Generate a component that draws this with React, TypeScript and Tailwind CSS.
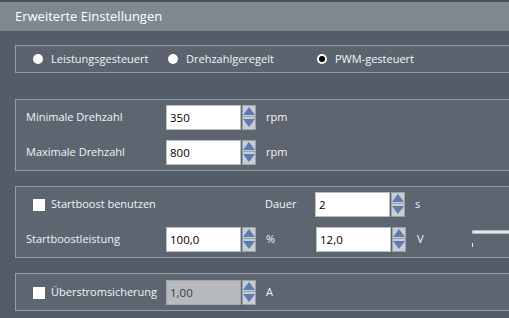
import React from "react";

const font = { fontFamily: '"Open Sans", "Noto Sans", sans-serif' };

const Spinner: React.FC = () => (
    <div className="flex flex-col w-[14px] h-[25px] ml-[1px]">
        <div className="h-[12px] bg-[#c9cdd1] border border-[#9ba1a7] flex items-center justify-center">
            <svg width="12" height="8" viewBox="0 0 12 8">
                <polygon points="6,0 12,8 0,8" fill="#5b7db4" />
            </svg>
        </div>
        <div className="h-[13px] bg-[#c9cdd1] border border-t-0 border-[#9ba1a7] flex items-center justify-center">
            <svg width="12" height="8" viewBox="0 0 12 8">
                <polygon points="0,0 12,0 6,8" fill="#5b7db4" />
            </svg>
        </div>
    </div>
);

interface fieldProps {
    value: string;
    disabled?: boolean;
}
const NumberField: React.FC<fieldProps> = ({ value, disabled }) => (
    <div className="flex items-center">
        <div
            className={
                disabled
                    ? "w-[75px] h-[25px] bg-[#b7bbbf] border border-[#a3a8ad] pl-[3px] flex items-center text-[11.5px] text-[#3a3a3a]"
                    : "w-[75px] h-[25px] bg-white border border-[#b9bdc1] pl-[3px] flex items-center text-[11.5px] text-black"
            }
        >
            {value}
        </div>
        <Spinner />
    </div>
);

const Radio: React.FC<{ checked?: boolean; label: string; width: string }> = ({ checked, label, width }) => (
    <div className={`flex items-center ${width}`}>
        <div className="w-[10px] h-[10px] rounded-full bg-white flex items-center justify-center ml-[2px]">
            {checked && <div className="w-[6px] h-[6px] rounded-full bg-black" />}
        </div>
        <span className="ml-[8px]">{label}</span>
    </div>
);

const Checkbox: React.FC = () => <div className="w-[12px] h-[12px] bg-white" />;

export default function App() {
    return (
        <div className="w-[509px] h-[318px] overflow-hidden bg-[#535d68] text-[11px] text-[#f2f4f6]" style={font}>
            <div className="h-[31px] bg-[#7f878f] border-t-2 border-[#484e55] flex items-center pl-[15px] text-[13px] text-white">
                Erweiterte Einstellungen
            </div>

            <div className="flex flex-col pl-[15px] pt-[14px] -mr-[10px]">
                <div className="h-[28px] border border-[#979da4] bg-[#5b646e] flex items-center pl-[15px]">
                    <Radio label="Leistungsgesteuert" width="w-[135px]" />
                    <Radio label="Drehzahlgeregelt" width="w-[149px]" />
                    <Radio checked label="PWM-gesteuert" width="w-[120px]" />
                </div>

                <div className="mt-[26px] border border-[#979da4] bg-[#5d6670] pl-[10px] pt-[5px] pb-[5px] flex flex-col gap-[10px]">
                    <div className="flex items-center">
                        <span className="w-[140px]">Minimale Drehzahl</span>
                        <NumberField value="350" />
                        <span className="ml-[10px]">rpm</span>
                    </div>
                    <div className="flex items-center">
                        <span className="w-[140px]">Maximale Drehzahl</span>
                        <NumberField value="800" />
                        <span className="ml-[10px]">rpm</span>
                    </div>
                </div>

                <div className="mt-[15px] border border-[#979da4] bg-[#5d6670] pl-[10px] pt-[5px] pb-[5px] flex flex-col gap-[10px]">
                    <div className="flex items-center">
                        <div className="w-[140px] flex items-center pl-[7px]">
                            <Checkbox />
                            <span className="ml-[6px] whitespace-nowrap">Startboost benutzen</span>
                        </div>
                        <div className="w-[90px]" />
                        <span className="w-[50px] ml-[9px]">Dauer</span>
                        <NumberField value="2" />
                        <span className="ml-[10px]">s</span>
                    </div>
                    <div className="flex items-center">
                        <span className="w-[140px]">Startboostleistung</span>
                        <NumberField value="100,0" />
                        <span className="w-[50px] ml-[10px]">%</span>
                        <NumberField value="12,0" />
                        <span className="ml-[11px]">V</span>
                        <div className="ml-[48px] flex flex-col flex-1">
                            <div className="h-[4px] bg-[#e6e8ea] border border-[#b0b5ba] mt-[-3px]" />
                            <div className="w-[1px] h-[4px] bg-[#e6e8ea] mt-[9px]" />
                        </div>
                    </div>
                </div>

                <div className="mt-[15px] border border-[#979da4] bg-[#5d6670] pl-[17px] pt-[6px] pb-[5px] flex items-center">
                    <Checkbox />
                    <span className="ml-[6px] w-[115px]">Überstromsicherung</span>
                    <NumberField value="1,00" disabled />
                    <span className="ml-[10px]">A</span>
                </div>
            </div>
        </div>
    );
}
